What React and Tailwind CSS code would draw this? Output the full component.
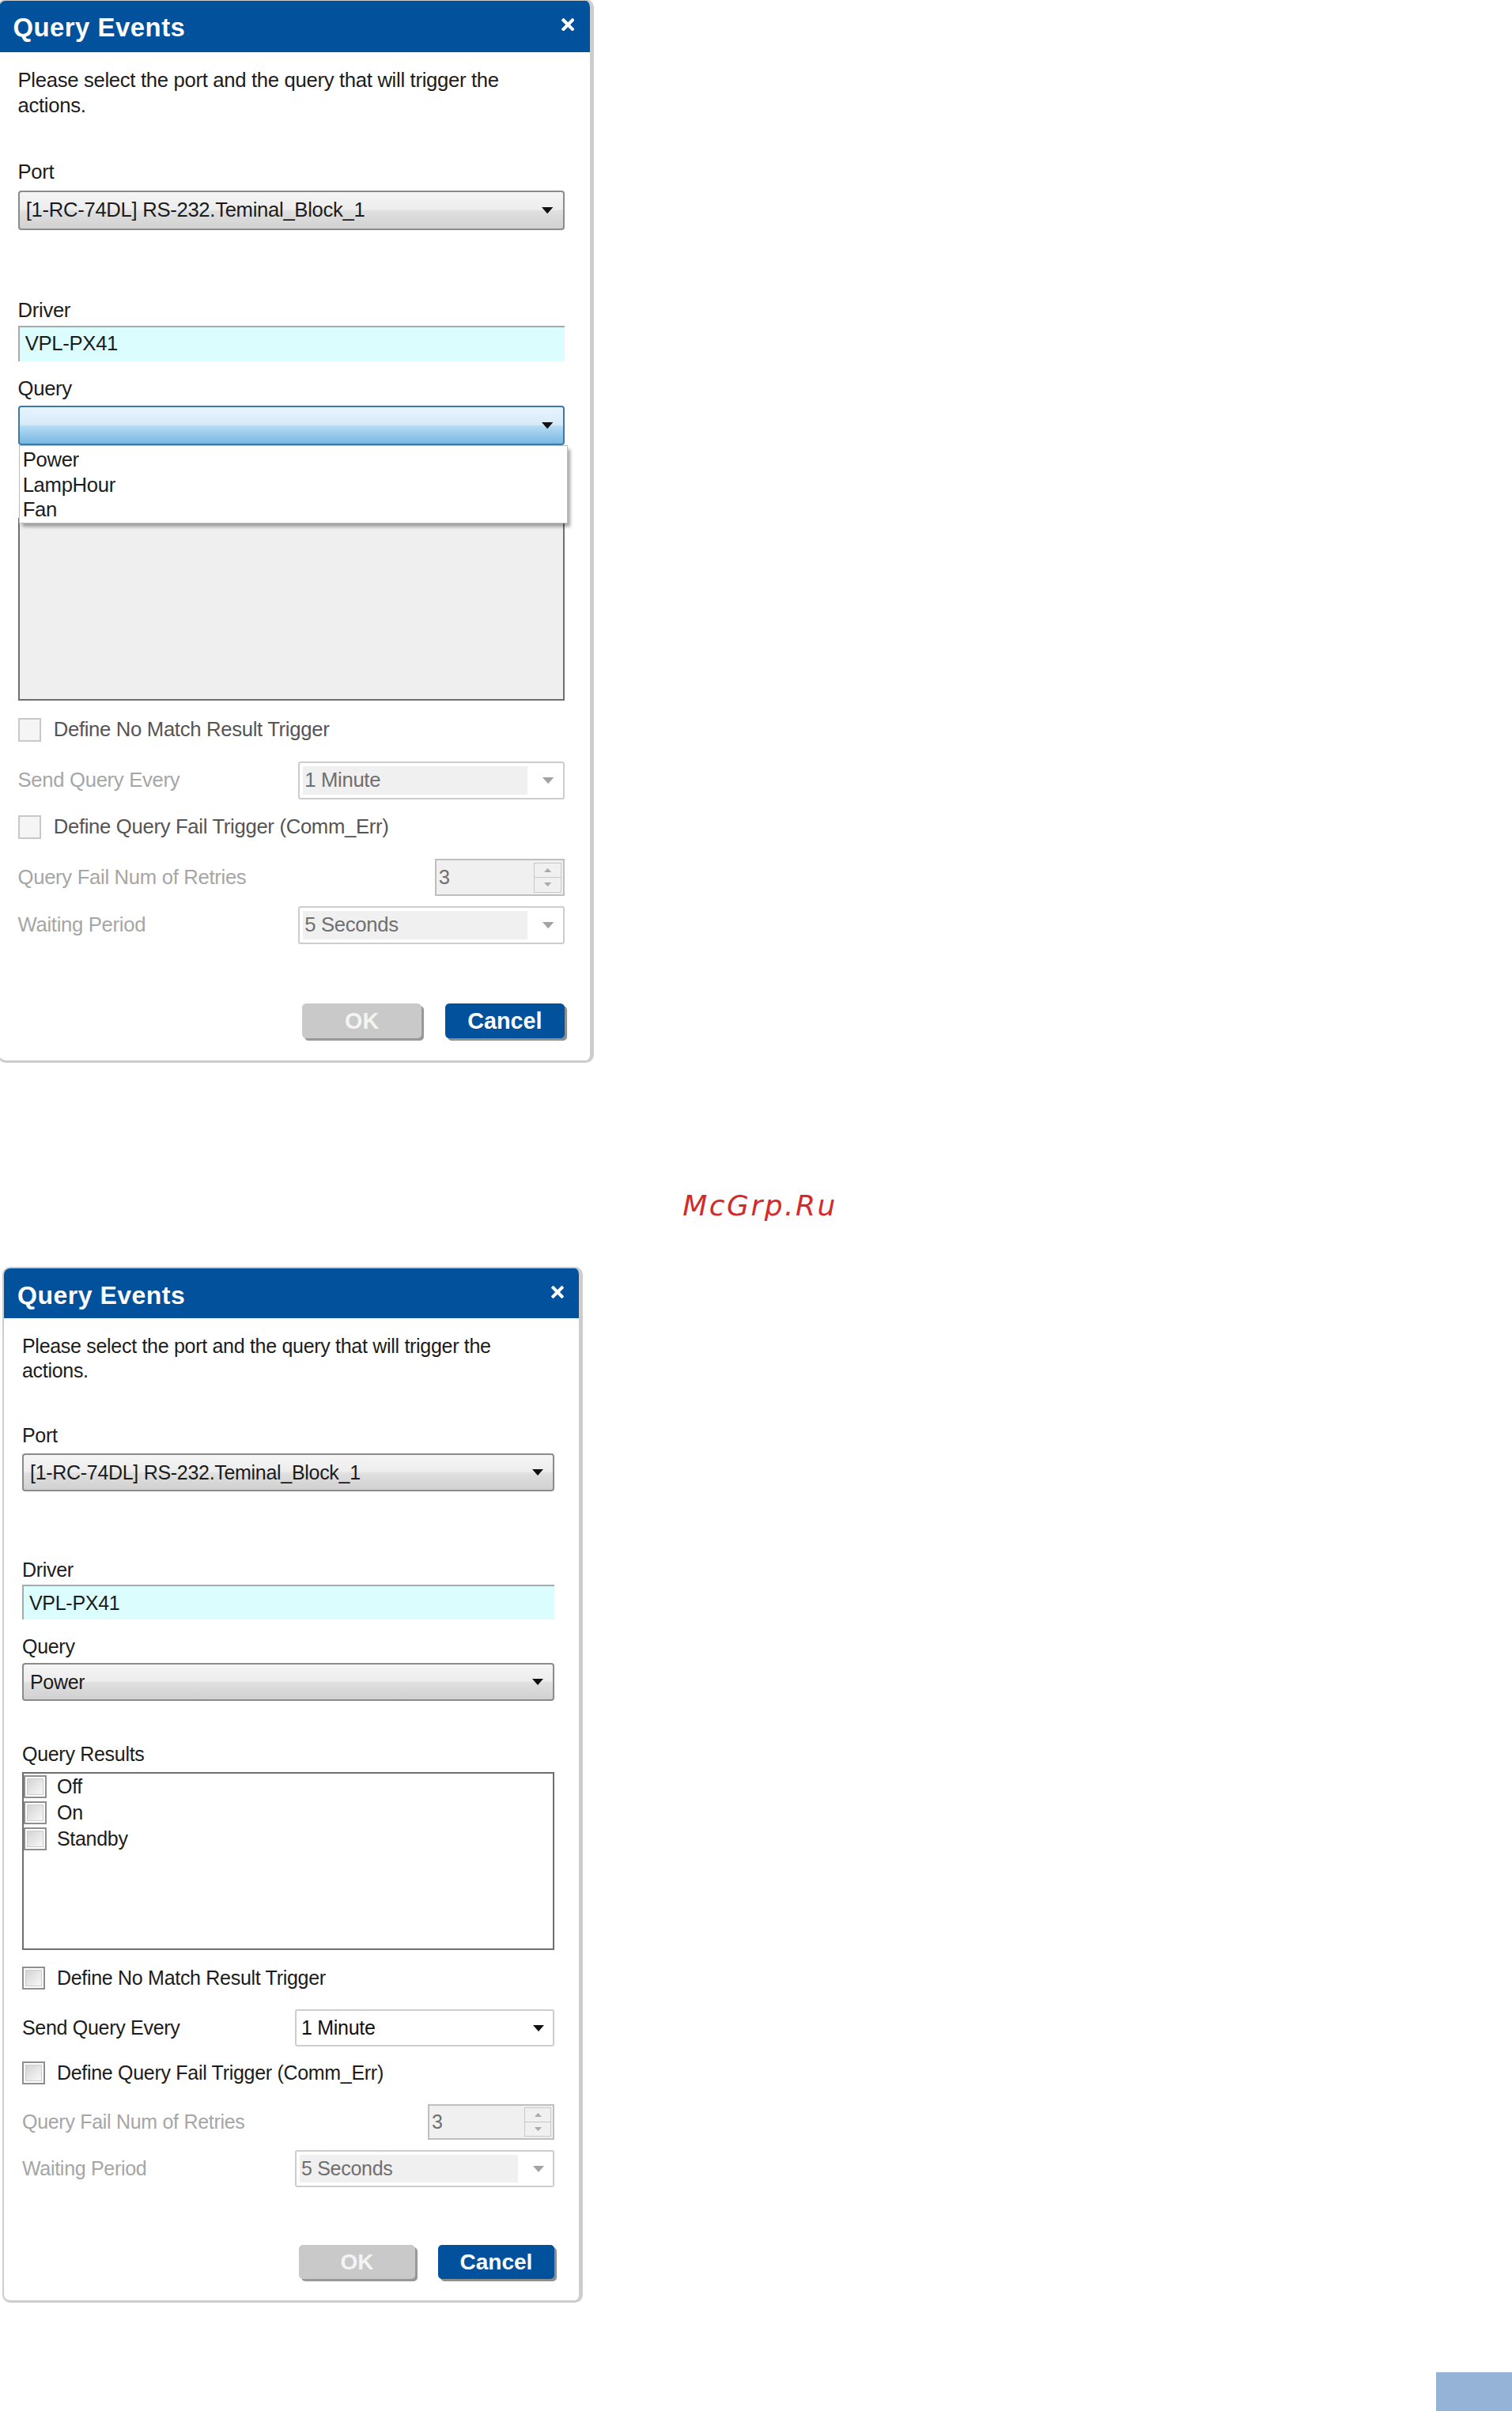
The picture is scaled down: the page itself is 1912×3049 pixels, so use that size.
import React from 'react';

const Arrow = ({ color = '#111111' }) => (
  <svg width="14" height="8" viewBox="0 0 14 8" className="shrink-0">
    <path d="M0 0H14L7 8Z" fill={color} />
  </svg>
);

const SpinArrow = ({ up }) => (
  <svg width="9" height="5" viewBox="0 0 9 5">
    <path d={up ? 'M0 5H9L4.5 0Z' : 'M0 0H9L4.5 5Z'} fill="#a9a9a9" />
  </svg>
);

const Checkbox = ({ disabled }) =>
  disabled ? (
    <span className="block w-[29px] h-[29px] shrink-0 border-2 border-[#c8c8c8] bg-[#f5f5f5]" />
  ) : (
    <span className="block w-[29px] h-[29px] shrink-0 border-2 border-[#8e8e8e] bg-white p-[2px]">
      <span className="block w-full h-full border border-[#cbcbcb] bg-gradient-to-br from-[#d4d4d4] to-[#f8f8f8]" />
    </span>
  );

const ComboBox = ({ value, active }) => (
  <div
    className={
      active
        ? 'h-[48px] flex items-center justify-between pl-[8px] pr-[12px] rounded-[4px] border-2 border-[#3c78a8] bg-[linear-gradient(#e8f3fc_0%,#d8ebf9_47%,#b3daf2_53%,#79b8e2_100%)]'
        : 'h-[48px] flex items-center justify-between pl-[8px] pr-[12px] rounded-[4px] border-2 border-[#8b8b8b] bg-[linear-gradient(#f5f5f5_0%,#ededed_47%,#dfdfdf_53%,#d1d1d1_100%)]'
    }
  >
    <span className="truncate">{value}</span>
    <Arrow />
  </div>
);

const DropSelect = ({ value, disabled }) => (
  <div className="w-[328px] h-[47px] rounded-[3px] border-2 border-[#cdcdcd] bg-white flex items-center p-[4px]">
    {disabled ? (
      <div className="flex-1 h-full flex items-center pl-[2px] bg-[#f0f0f0] text-[#6f6f6f]">{value}</div>
    ) : (
      <div className="flex-1 h-full flex items-center pl-[2px] text-[#111111]">{value}</div>
    )}
    <div className="w-[40px] flex justify-end pr-[7px]">
      <Arrow color={disabled ? '#a3a3a3' : '#111111'} />
    </div>
  </div>
);

const SpinBox = () => (
  <div className="w-[160px] h-[45px] border-2 border-[#bfbfbf] bg-[#f0f0f0] flex items-center justify-between pl-[3px] pr-[2px] text-[#707070]">
    <span>3</span>
    <div className="w-[34px] h-[37px] flex flex-col border border-[#c8c8c8]">
      <div className="flex-1 flex items-center justify-center border-b border-[#c8c8c8]">
        <SpinArrow up />
      </div>
      <div className="flex-1 flex items-center justify-center">
        <SpinArrow />
      </div>
    </div>
  </div>
);

const results = ['Off', 'On', 'Standby'];
const queries = ['Power', 'LampHour', 'Fan'];

const QueryDialog = ({ open }) => (
  <div className="w-[734px] rounded-[10px] border-2 border-r-[5px] border-b-[3px] border-[#cdcdcd] bg-white overflow-hidden font-['Liberation_Sans',Arial,sans-serif] text-[25px] leading-[31px] tracking-[-0.3px] text-[#1c1c1c]">
    {/* Title bar */}
    <div className="h-[63px] bg-[#01519c] flex items-center justify-between pl-[17px] pr-[19px]">
      <span className="mt-[5px] font-bold text-[32px] leading-[32px] tracking-[0.5px] text-white">Query Events</span>
      <svg width="16" height="16" viewBox="0 0 16 16" className="-mt-[4px]">
        <path d="M2.5 2.5L13.5 13.5M13.5 2.5L2.5 13.5" stroke="#ffffff" strokeWidth="4" strokeLinecap="square" />
      </svg>
    </div>

    <div className="pt-[20px] pl-[23px] pr-[31px] pb-[27px]">
      <p>
        Please select the port and the query that will trigger the
        <br />
        actions.
      </p>

      <p className="mt-[51px]">Port</p>
      <div className="mt-[7px]">
        <ComboBox value="[1-RC-74DL] RS-232.Teminal_Block_1" />
      </div>

      <p className="mt-[84px]">Driver</p>
      <div className="mt-[3px] h-[44px] bg-[#dcfdfe] border-t-2 border-l-2 border-[#a9a9a9] pl-[7px] flex items-center">
        VPL-PX41
      </div>

      <p className="mt-[19px]">Query</p>
      <div className="relative mt-[5px]">
        <ComboBox active={open} value={open ? '' : 'Power'} />
        {open && (
          <div className="absolute left-[1px] top-full z-10 w-[676px] h-[97px] bg-white border border-[#bdbdbd] shadow-[4px_5px_4px_rgba(0,0,0,0.35)] pl-[4px] pt-[2px]">
            {queries.map((q) => (
              <div key={q} className="leading-[31px]">{q}</div>
            ))}
          </div>
        )}
      </div>

      {/* hidden under the open list in the first dialog */}
      <p className={open ? 'mt-[52px] invisible' : 'mt-[52px]'}>Query Results</p>
      <div
        className={
          open
            ? 'mt-[7px] h-[225px] border-2 border-[#6f6f6f] bg-[#efefef]'
            : 'mt-[7px] h-[225px] border-2 border-[#6f6f6f] bg-white'
        }
      >
        {!open &&
          results.map((r) => (
            <div key={r} className="h-[33px] flex items-center gap-[13px]">
              <Checkbox />
              <span>{r}</span>
            </div>
          ))}
      </div>

      <div className="mt-[20px] flex items-center gap-[15px]">
        <Checkbox disabled={open} />
        <span className={open ? 'text-[#555555]' : ''}>Define No Match Result Trigger</span>
      </div>

      <div className="mt-[24px] h-[47px] flex items-center justify-between">
        <span className={open ? 'text-[#a6a6a6]' : ''}>Send Query Every</span>
        <DropSelect value="1 Minute" disabled={open} />
      </div>

      <div className="mt-[18px] flex items-center gap-[15px]">
        <Checkbox disabled={open} />
        <span className={open ? 'text-[#555555]' : ''}>Define Query Fail Trigger (Comm_Err)</span>
      </div>

      <div className="mt-[24px] h-[45px] flex items-center justify-between">
        <span className="text-[#a6a6a6]">Query Fail Num of Retries</span>
        <SpinBox />
      </div>

      <div className="mt-[13px] h-[47px] flex items-center justify-between">
        <span className="text-[#a6a6a6]">Waiting Period</span>
        <DropSelect value="5 Seconds" disabled />
      </div>

      <div className="mt-[73px] flex justify-end gap-[29px]">
        <button className="w-[147px] h-[43px] rounded-[5px] bg-[#c9c9c9] text-[#f4f4f4] font-bold text-[28px] leading-[28px] tracking-normal shadow-[3px_3px_0_#999999]">
          OK
        </button>
        <button className="w-[147px] h-[43px] rounded-[5px] bg-[#01519c] text-white font-bold text-[28px] leading-[28px] tracking-normal shadow-[3px_3px_0_#8f8f8f]">
          Cancel
        </button>
      </div>
    </div>
  </div>
);

export default function App() {
  return (
    <div className="w-[1912px] h-[3049px] bg-white overflow-hidden flex flex-col">
      <div className="-mt-px -ml-[3px] self-start [zoom:1.027]">
        <QueryDialog open />
      </div>

      <p className="mt-[163px] pl-[10px] text-center font-['DejaVu_Sans',sans-serif] italic text-[36px] leading-[36px] tracking-[2.5px] text-[#d42a2a]">
        McGrp.Ru
      </p>

      <div className="mt-[59px] ml-[3px] self-start">
        <QueryDialog />
      </div>

      <div className="mt-auto self-end w-[96px] h-[49px] bg-[#95b3d7]" />
    </div>
  );
}
